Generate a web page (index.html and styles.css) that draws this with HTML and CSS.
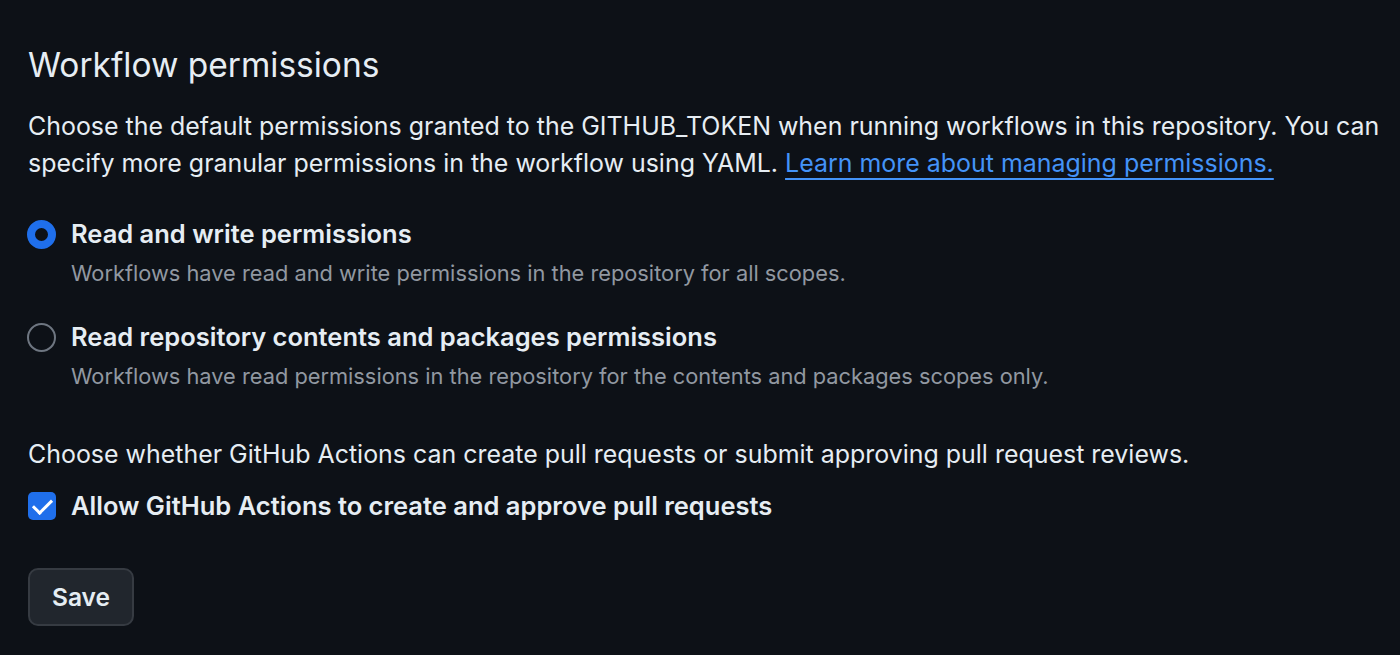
FILE: index.html
```html
<!DOCTYPE html>
<html lang="en">
<head>
  <meta charset="UTF-8">
  <title>Workflow permissions</title>
  <link rel="stylesheet" href="styles.css">
</head>
<body>
  <form class="settings" autocomplete="off">
    <h2 class="title">Workflow permissions</h2>
    <p class="intro">
      Choose the default permissions granted to the GITHUB_TOKEN when running workflows in this repository. You can<br>
      specify more granular permissions in the workflow using YAML. <a href="#">Learn more about managing permissions.</a>
    </p>

    <label class="option">
      <input type="radio" name="perm" value="write" checked>
      <span class="option-text">
        <span class="option-title">Read and write permissions</span>
        <span class="option-note">Workflows have read and write permissions in the repository for all scopes.</span>
      </span>
    </label>

    <label class="option">
      <input type="radio" name="perm" value="read">
      <span class="option-text">
        <span class="option-title">Read repository contents and packages permissions</span>
        <span class="option-note">Workflows have read permissions in the repository for the contents and packages scopes only.</span>
      </span>
    </label>

    <p class="intro second">Choose whether GitHub Actions can create pull requests or submit approving pull request reviews.</p>

    <label class="option check">
      <input type="checkbox" checked>
      <span class="option-title">Allow GitHub Actions to create and approve pull requests</span>
    </label>

    <button type="submit" class="save-btn">Save</button>
  </form>
</body>
</html>
```

FILE: styles.css
```css
body {
  margin: 0;
  background: #0d1117;
  color: #e6edf3;
  font-family: Inter, "Noto Sans", sans-serif;
}
.settings {
  width: 1372px;
  padding: 41px 0 0 28px;
}
.title {
  margin: 0 0 19px;
  font-size: 33.5px;
  font-weight: 400;
  line-height: 48px;
}
.intro {
  margin: 0;
  font-size: 24.95px;
  line-height: 37px;
  white-space: nowrap;
}
.intro a {
  color: #4493f8;
  text-decoration: underline;
  text-decoration-thickness: 2px;
  text-underline-offset: 6px;
}
.option {
  display: flex;
  gap: 15px;
  margin-top: 35px;
}
.option + .option {
  margin-top: 32px;
}
.option-text {
  display: flex;
  flex-direction: column;
  gap: 7px;
}
.option-title {
  font-size: 25.5px;
  font-weight: 600;
  line-height: 34px;
}
.option-note {
  font-size: 21.8px;
  color: #9198a1;
  line-height: 30px;
}
input[type="radio"] {
  appearance: none;
  margin: 3px 0 0 -1px;
  width: 29px;
  height: 29px;
  border-radius: 50%;
  border: 2px solid #6e7681;
  flex-shrink: 0;
}
input[type="radio"]:checked {
  border: 8px solid #1f6feb;
}
input[type="checkbox"] {
  appearance: none;
  margin: 3px 0 0;
  width: 28px;
  height: 28px;
  border-radius: 5px;
  background: #1f6feb;
  flex-shrink: 0;
  display: grid;
  place-items: center;
}
input[type="checkbox"]:checked::after {
  content: "";
  width: 16px;
  height: 8px;
  border-left: 3px solid #fff;
  border-bottom: 3px solid #fff;
  transform: translateY(-2px) rotate(-45deg);
}
.second {
  margin-top: 45px;
}
.check {
  margin-top: 16px;
}
.save-btn {
  display: block;
  margin-top: 45px;
  padding: 0 22px;
  height: 58px;
  font-family: inherit;
  font-size: 24.5px;
  font-weight: 600;
  color: #e6edf3;
  background: #21262d;
  border: 2px solid #363b42;
  border-radius: 10px;
  cursor: pointer;
}
```
